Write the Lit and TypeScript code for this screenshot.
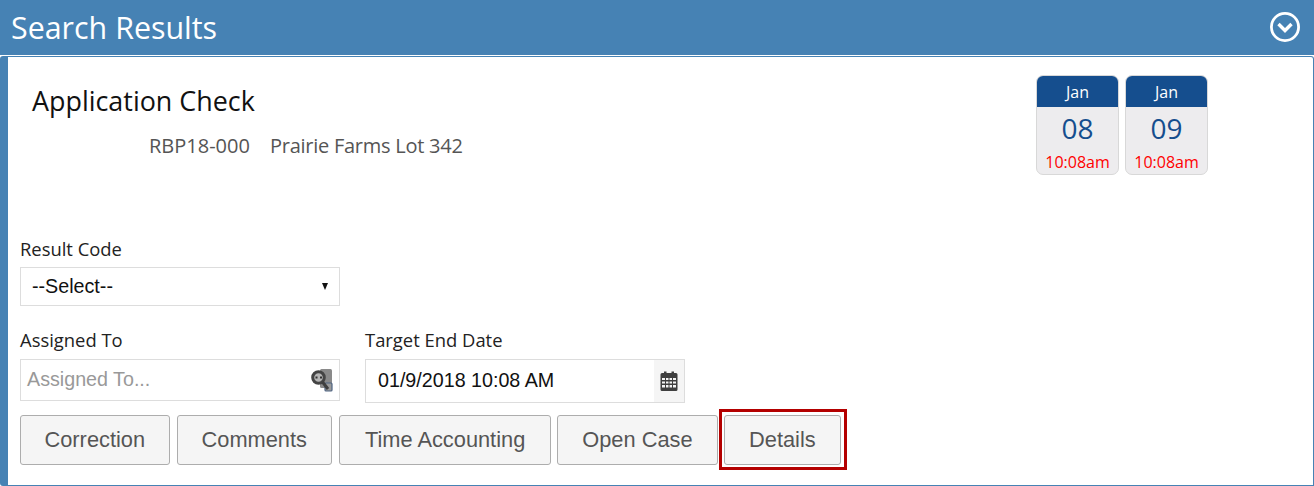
import { LitElement, html, css } from "lit";
import { customElement } from "lit/decorators.js";

@customElement("app-root")
export class AppRoot extends LitElement {
  static styles = css`
    :host { display: block; width: 1314px; height: 486px; overflow: hidden; background: #fff; font-family: "Open Sans", sans-serif; color: #222; }
    * { box-sizing: border-box; }
    .bar { height: 55px; background: #4682b4; display: flex; align-items: center; justify-content: space-between; padding: 0 13px 0 11px; color: #fff; }
    .bar h1 { margin: 0; font-size: 30.4px; font-weight: 400; line-height: 55px; }
    .chev { width: 32px; height: 32px; display: block; margin-bottom: 2px; }
    .panel { margin-top: 1px; height: 430px; border: 1px solid #4682b4; border-left: 8px solid #4682b4; border-radius: 3px 3px 0 3px; padding: 18px 0 0 12px; }
    .top { height: 162px; display: flex; justify-content: space-between; padding-right: 105px; }
    .info { padding: 8px 0 0 12px; }
    h2 { margin: 0; font-size: 26.9px; font-weight: 400; line-height: 36px; color: #111; }
    .sub { margin: 14px 0 0 117px; font-size: 20px; line-height: 26px; color: #555; display: flex; gap: 20px; }
    .name { letter-spacing: -0.25px; }
    .cals { display: flex; gap: 6px; }
    .cal { width: 83px; height: 100px; border: 1px solid #d8d8d8; border-radius: 7px; background: #edecee; overflow: hidden; text-align: center; }
    .mon { height: 31px; background: #154e8e; color: #fff; font-size: 16px; line-height: 32px; }
    .day { font-size: 28px; line-height: 34px; margin-top: 4px; color: #154e8e; }
    .time { font-size: 16px; line-height: 20px; margin-top: 7px; color: #f00; }
    label { display: block; font-size: 18.4px; line-height: 24px; color: #222; }
    .ctl { display: flex; align-items: center; border: 1px solid #ddd; background: #fff; width: 320px; font-family: "Liberation Sans", sans-serif; font-size: 19.7px; color: #111; }
    .select { height: 39px; padding: 0 11px; justify-content: space-between; margin-top: 6px; }
    .caret { width: 0; height: 0; border-left: 3.5px solid transparent; border-right: 3.5px solid transparent; border-top: 7px solid #111; }
    .row { display: flex; gap: 25px; margin-top: 22px; }
    .assign { height: 42px; padding: 0 6px 2px 6px; justify-content: space-between; color: #999; margin-top: 7px; }
    .assign svg { margin-top: 2px; }
    .date { height: 44px; padding-left: 12px; justify-content: space-between; margin-top: 7px; align-items: stretch; }
    .date span { align-self: center; margin-bottom: 2px; }
    .addon { width: 30px; background: #f5f5f5; display: flex; align-items: center; justify-content: center; }
    .btns { display: flex; gap: 7px; margin-top: 12px; }
    button { height: 50px; padding: 0 24px; border: 1px solid #adadad; border-radius: 3px; background: #f5f5f5; color: #555; font-family: "Liberation Sans", sans-serif; font-size: 21.8px; }
    .narrow { padding: 0 23.5px; }
    .wide { padding: 0 25px; }
    .open { margin-left: -1px; }
    .hl { position: relative; margin-left: -1px; display: flex; }
    .hl button { padding: 0 24.5px; }
    .hl::after { content: ""; position: absolute; top: -6px; left: -5px; right: -6px; bottom: -5px; border: 3px solid #b40000; pointer-events: none; }
  `;

  render() {
    return html`
      <div class="bar">
        <h1>Search Results</h1>
        <svg class="chev" viewBox="0 0 32 32" fill="none" stroke="#fff">
          <circle cx="16" cy="16" r="13.6" stroke-width="2.8" />
          <path d="M9.5 13 L16 19.5 L22.5 13" stroke-width="3.4" />
        </svg>
      </div>
      <div class="panel">
        <div class="top">
          <div class="info">
            <h2>Application Check</h2>
            <div class="sub"><span>RBP18-000</span><span class="name">Prairie Farms Lot 342</span></div>
          </div>
          <div class="cals">
            <div class="cal"><div class="mon">Jan</div><div class="day">08</div><div class="time">10:08am</div></div>
            <div class="cal"><div class="mon">Jan</div><div class="day">09</div><div class="time">10:08am</div></div>
          </div>
        </div>
        <label>Result Code</label>
        <div class="ctl select"><span>--Select--</span><span class="caret"></span></div>
        <div class="row">
          <div>
            <label>Assigned To</label>
            <div class="ctl assign"><span>Assigned To...</span>
              <svg width="22" height="23" viewBox="0 0 22 23">
                <rect x="9" y="0" width="12" height="19" rx="1.5" fill="#8a8a8a" />
                <rect x="14" y="14" width="7" height="8" rx="1" fill="#9a9a9a" stroke="#4f6482" stroke-width="1.2" />
                <circle cx="7.5" cy="8.5" r="5.8" fill="#b5b5b5" stroke="#444" stroke-width="3" />
                <path d="M4.5 8.5h2M9 8.5h2" stroke="#333" stroke-width="1.8" />
                <path d="M11.5 13 L17 20" stroke="#3f3f3f" stroke-width="3" />
              </svg>
            </div>
          </div>
          <div>
            <label>Target End Date</label>
            <div class="ctl date"><span>01/9/2018 10:08 AM</span>
              <div class="addon">
                <svg width="18" height="20" viewBox="0 0 18 20">
                  <path fill="#3f3f3f" fill-rule="evenodd" d="M2 2h2V.5h2.5V2h5V.5H14V2h2a1.5 1.5 0 0 1 1.5 1.5v15A1.5 1.5 0 0 1 16 20H2a1.5 1.5 0 0 1-1.5-1.5v-15A1.5 1.5 0 0 1 2 2zM2 7v2h3V7zm4 0v2h2.5V7zm3.5 0v2H12V7zM13 7v2h3V7zM2 10.5v2h3v-2zm4 0v2h2.5v-2zm3.5 0v2H12v-2zm3.500 0v2h3v-2zM2 14v2.5h3V14zm4 0v2.5h2.5V14zm3.5 0v2.5H12V14zm3.5 0v2.5h3V14z" />
                </svg>
              </div>
            </div>
          </div>
        </div>
        <div class="btns">
          <button class="narrow">Correction</button>
          <button>Comments</button>
          <button class="wide">Time Accounting</button>
          <button class="open">Open Case</button>
          <div class="hl"><button>Details</button></div>
        </div>
      </div>
    `;
  }
}
